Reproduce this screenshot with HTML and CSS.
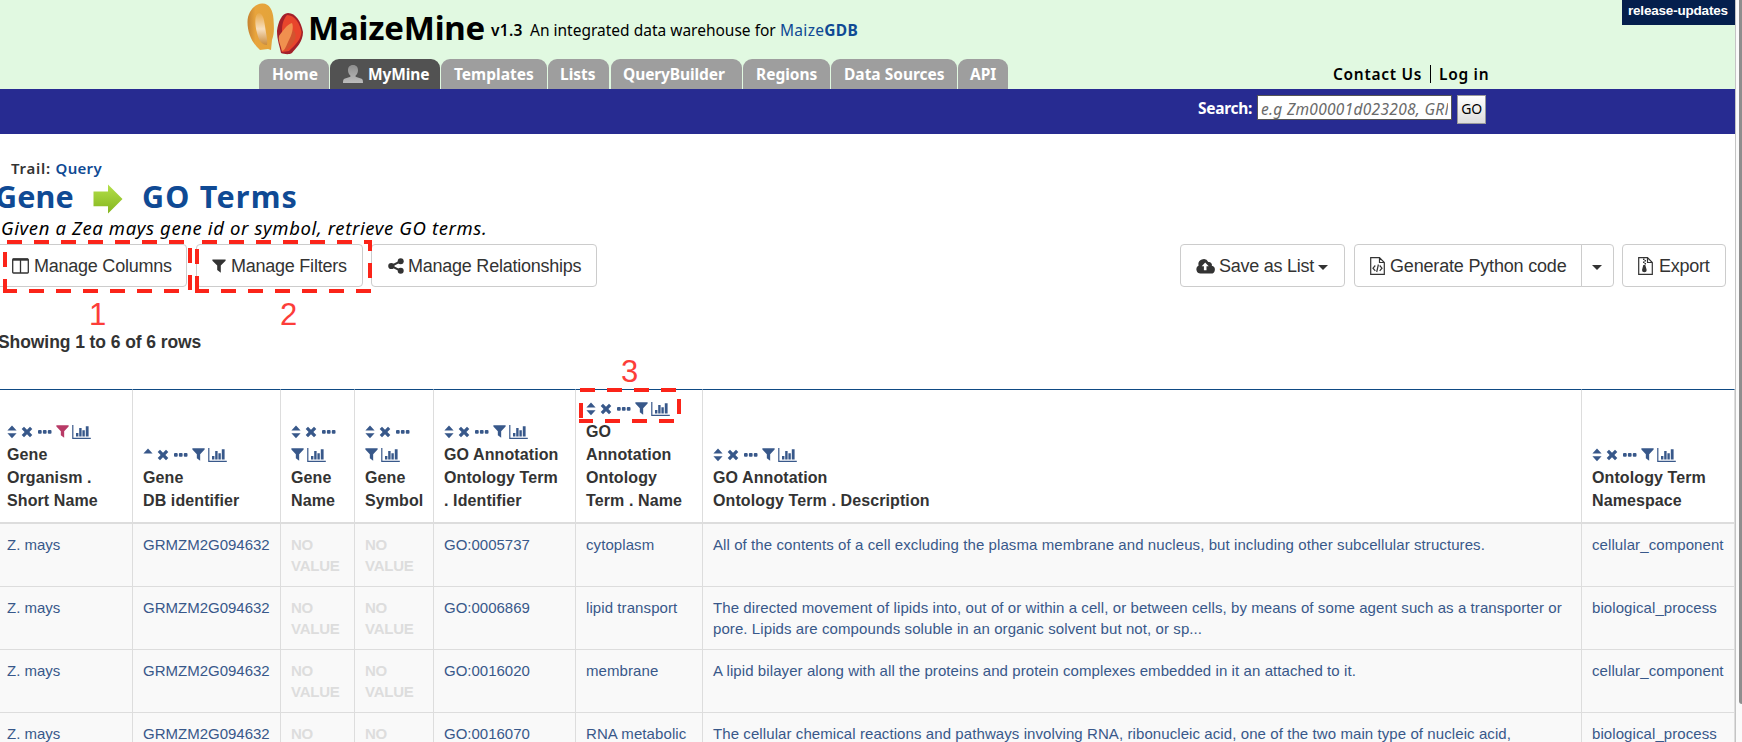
FILE: index.html
```html
<!DOCTYPE html>
<html lang="en">
<head>
<meta charset="utf-8">
<title>MaizeMine</title>
<link rel="stylesheet" href="styles.css">
</head>
<body>
<svg class="defs" width="0" height="0">
  <defs>
    <linearGradient id="gold" x1="0" x2="1"><stop offset="0" stop-color="#c58230"/><stop offset=".3" stop-color="#e8a43c"/><stop offset="1" stop-color="#e3a43a"/></linearGradient>
    <linearGradient id="shine" x1="0" y1="0" x2="0" y2="1"><stop offset="0" stop-color="#e8a848"/><stop offset=".5" stop-color="#f7dfbe"/><stop offset="1" stop-color="#c98a3a"/></linearGradient>
    <linearGradient id="person" x1="0" y1="0" x2="0" y2="1"><stop offset="0" stop-color="#8e8e8e"/><stop offset="1" stop-color="#bdbdbd"/></linearGradient>
    <linearGradient id="lime" x1="0" y1="0" x2="0" y2="1"><stop offset="0" stop-color="#b4e04a"/><stop offset="1" stop-color="#84b51e"/></linearGradient>
    <symbol id="filter" viewBox="0 0 14 14"><path d="M.4.4h13.2v1.3L8.8 6.6V13.8L5.2 11V6.6L.4 1.7z"/></symbol>
    <symbol id="sort" viewBox="0 0 10 14"><path d="M5 .6 9.6 5.6H.4zM.4 8.2h9.2L5 13.2z"/></symbol>
    <symbol id="sort-asc" viewBox="0 0 10 14"><path d="M5 .6 9.6 5.4H.4z"/></symbol>
    <symbol id="times" viewBox="0 0 12 12"><path d="M3 .8 6 3.7 9 .8l2.3 2.3L8.4 6l2.9 2.9L9 11.2 6 8.3l-3 2.9L.7 8.9 3.6 6 .7 3.1z"/></symbol>
    <symbol id="dots" viewBox="0 0 14 4"><rect x="0" y="0" width="3.7" height="3.7" rx="1"/><rect x="4.9" y="0" width="3.7" height="3.7" rx="1"/><rect x="9.8" y="0" width="3.7" height="3.7" rx="1"/></symbol>
    <symbol id="chart" viewBox="0 0 19 14"><path d="M.2 0h1.2v12.8H18.800V14H.2z"/><path d="M4 8h2.400v3.600H4zM7.200 3h2.400v8.600H7.200zM10.400 5.200h2.400v6.400h-2.400zM13.800 1.200H16.600v10.400H13.800z"/></symbol>
  </defs>
</svg>
<div class="page">
  <header class="banner">
    <div class="brand">
      <svg class="logo" viewBox="0 0 58 54" width="58" height="54">
        <path d="M15 1.500C22 1 26 8 26.500 17c.5 9 1 14-1.500 21l-1 10-3-1-8 1C5 41 .5 31 .5 20 .5 10 7 2 15 1.500z" fill="url(#gold)"/>
        <path d="M12 11c4 1 5 6 6 13 1 8 3 15 2 19-5 0-8-4-10-12C8 23 7 12 12 11z" fill="url(#shine)"/>
        <path d="M41 11C49 11 54 20 56 30c0 10-7 16-11 21-3 2-8 1-11 0-1-6-4-13-4-22 1-9 5-18 11-18z" fill="#a3202a"/>
        <path d="M40 13c8 0 13 9 14.500 17C54 38 48 43 42 49l-7 1c-1-6-2-13 0-20 0-8 1-12 5-17z" fill="#e8452c"/>
        <path d="M46 28c6 5 1 15-8 21l1-14z" fill="#d2542f"/>
        <path d="M45 21c2 4 0 12-4 19-2 5-4 9-6 9-1-5-4-10-3-15 3-4 8-12 13-13z" fill="#f0904f"/>
      </svg>
      <h1 class="name">MaizeMine</h1>
      <div class="strap"><b class="version">v1.3</b><span class="tagline">An integrated data warehouse for</span><a class="gdb">Maize<b>GDB</b></a></div>
      <a class="release">release-updates</a>
    </div>
    <div class="navrow">
      <nav class="tabs">
        <a class="tab t-home">Home</a>
        <a class="tab t-mymine"><svg viewBox="0 0 20 18" width="20" height="18"><path d="M10 0c3.500 0 5 2.300 5 5.200 0 2.800-1.200 4.300-2.400 5.300v1.300l6 1.900c1 .5 1.400 1.700 1.400 4.300H0c0-2.600.4-3.800 1.400-4.300l6-1.900v-1.300C6.200 9.500 5 8 5 5.200 5 2.300 6.500 0 10 0z" fill="url(#person)"/></svg>MyMine</a>
        <a class="tab t-templates">Templates</a>
        <a class="tab t-lists">Lists</a>
        <a class="tab t-query">QueryBuilder</a>
        <a class="tab t-regions">Regions</a>
        <a class="tab t-data">Data Sources</a>
        <a class="tab t-api">API</a>
      </nav>
      <div class="account"><a class="contact">Contact Us</a><a class="login">Log in</a></div>
    </div>
  </header>
  <div class="searchbar"><span class="search-label">Search:</span><span class="search-input">e.g Zm00001d023208, GRM</span><span class="go">GO</span></div>
  <main>
    <div class="trail"><span>Trail: </span><a>Query</a></div>
    <h2 class="title"><span class="t-gene">Gene</span><svg class="arrow" viewBox="0 0 30 30" width="30" height="30"><path d="M.5 7.500h14.500V.500L29.500 15 15 29.500v-7.200H.5z" fill="url(#lime)"/></svg><span class="t-go">GO Terms</span></h2>
    <p class="desc">Given a Zea mays gene id or symbol, retrieve GO terms.</p>
    <div class="toolbar">
      <a class="btn b-cols"><svg viewBox="0 0 17 16" width="17" height="16"><path d="M1.500 1h14a.8.8 0 0 1 .8.8v12.400a.8.8 0 0 1-.8.8h-14a.8.8 0 0 1-.8-.8V1.800a.8.8 0 0 1 .8-.8zM8.500 2v13" fill="none" stroke="#333" stroke-width="1.300"/><path d="M1 .5h15v2.200H1z"/></svg><span>Manage Columns</span></a>
      <a class="btn b-filters"><svg width="14" height="14"><use href="#filter"/></svg><span>Manage Filters</span></a>
      <a class="btn b-rel"><svg viewBox="0 0 16 16" width="16" height="16"><path d="M12.800 3.200 3.200 8l9.600 4.800" fill="none" stroke="#333" stroke-width="2"/><circle cx="3.300" cy="8" r="3.100"/><circle cx="12.700" cy="3.300" r="3"/><circle cx="12.700" cy="12.700" r="3"/></svg><span>Manage Relationships</span></a>
      <a class="btn b-save"><svg viewBox="0 0 19 16" width="19" height="16"><path fill-rule="evenodd" d="M4.500 15.500A4.200 4.200 0 0 1 2.600 7.600 5.200 5.200 0 0 1 12.300 4a3 3 0 0 1 3.500 3.800 3.900 3.900 0 0 1-1.100 7.700zM9.200 4.500 5.700 8.300h2.200v4h2.600v-4h2.200z"/></svg><span>Save as List</span><i class="caret"></i></a>
      <a class="btn b-gen"><svg viewBox="0 0 15 18" width="15" height="18"><path d="M.7.700h8.800l4.800 4.800v11.800H.7zM9.500.700v4.800h4.800M5.300 8.500 3 11.200l2.300 2.700M9.700 8.500l2.300 2.700-2.300 2.700M8.400 7.500 6.700 15" fill="none" stroke="#333" stroke-width="1.200"/></svg><span>Generate Python code</span></a>
      <a class="btn b-more"><i class="caret"></i></a>
      <a class="btn b-export"><svg viewBox="0 0 15 18" width="15" height="18"><path d="M.7.700h8.800l4.800 4.800v11.800H.7zM9.500.700v4.800h4.800" fill="none" stroke="#333" stroke-width="1.200"/><path d="M5 1.500h1.500V3H5zM6.500 3H8v1.500H6.500zM5 4.500h1.500V6H5zM6.500 6H8v1.500H6.500zM5.300 8h2l1.400 5a2.300 2.300 0 1 1-4.700 0z"/></svg><span>Export</span></a>
    </div>
    <p class="showing">Showing 1 to 6 of 6 rows</p>
    <table class="results">
      <colgroup><col class="c1"><col class="c2"><col class="c3"><col class="c4"><col class="c5"><col class="c6"><col class="c7"><col class="c8"></colgroup>
      <thead><tr>
        <th><div class="tools"><svg class="i-sort"><use href="#sort"/></svg><svg class="i-times"><use href="#times"/></svg><svg class="i-dots"><use href="#dots"/></svg><svg class="i-filter on"><use href="#filter"/></svg><svg class="i-chart"><use href="#chart"/></svg></div>Gene<br>Organism .<br>Short Name</th>
        <th><div class="tools"><svg class="i-sort"><use href="#sort-asc"/></svg><svg class="i-times"><use href="#times"/></svg><svg class="i-dots"><use href="#dots"/></svg><svg class="i-filter"><use href="#filter"/></svg><svg class="i-chart"><use href="#chart"/></svg></div>Gene<br>DB identifier</th>
        <th><div class="tools"><svg class="i-sort"><use href="#sort"/></svg><svg class="i-times"><use href="#times"/></svg><svg class="i-dots"><use href="#dots"/></svg></div><div class="tools"><svg class="i-filter first"><use href="#filter"/></svg><svg class="i-chart"><use href="#chart"/></svg></div>Gene<br>Name</th>
        <th><div class="tools"><svg class="i-sort"><use href="#sort"/></svg><svg class="i-times"><use href="#times"/></svg><svg class="i-dots"><use href="#dots"/></svg></div><div class="tools"><svg class="i-filter first"><use href="#filter"/></svg><svg class="i-chart"><use href="#chart"/></svg></div>Gene<br>Symbol</th>
        <th><div class="tools"><svg class="i-sort"><use href="#sort"/></svg><svg class="i-times"><use href="#times"/></svg><svg class="i-dots"><use href="#dots"/></svg><svg class="i-filter"><use href="#filter"/></svg><svg class="i-chart"><use href="#chart"/></svg></div>GO Annotation<br>Ontology Term<br>. Identifier</th>
        <th><div class="tools"><svg class="i-sort"><use href="#sort"/></svg><svg class="i-times"><use href="#times"/></svg><svg class="i-dots"><use href="#dots"/></svg><svg class="i-filter"><use href="#filter"/></svg><svg class="i-chart"><use href="#chart"/></svg></div>GO<br>Annotation<br>Ontology<br>Term . Name</th>
        <th><div class="tools"><svg class="i-sort"><use href="#sort"/></svg><svg class="i-times"><use href="#times"/></svg><svg class="i-dots"><use href="#dots"/></svg><svg class="i-filter"><use href="#filter"/></svg><svg class="i-chart"><use href="#chart"/></svg></div>GO Annotation<br>Ontology Term . Description</th>
        <th><div class="tools"><svg class="i-sort"><use href="#sort"/></svg><svg class="i-times"><use href="#times"/></svg><svg class="i-dots"><use href="#dots"/></svg><svg class="i-filter"><use href="#filter"/></svg><svg class="i-chart"><use href="#chart"/></svg></div>Ontology Term<br>Namespace</th>
      </tr></thead>
      <tbody>
        <tr><td>Z. mays</td><td>GRMZM2G094632</td><td class="none">NO<br>VALUE</td><td class="none">NO<br>VALUE</td><td>GO:0005737</td><td>cytoplasm</td><td>All of the contents of a cell excluding the plasma membrane and nucleus, but including other subcellular structures.</td><td>cellular_component</td></tr>
        <tr><td>Z. mays</td><td>GRMZM2G094632</td><td class="none">NO<br>VALUE</td><td class="none">NO<br>VALUE</td><td>GO:0006869</td><td>lipid transport</td><td>The directed movement of lipids into, out of or within a cell, or between cells, by means of some agent such as a transporter or<br>pore. Lipids are compounds soluble in an organic solvent but not, or sp...</td><td>biological_process</td></tr>
        <tr><td>Z. mays</td><td>GRMZM2G094632</td><td class="none">NO<br>VALUE</td><td class="none">NO<br>VALUE</td><td>GO:0016020</td><td>membrane</td><td>A lipid bilayer along with all the proteins and protein complexes embedded in it an attached to it.</td><td>cellular_component</td></tr>
        <tr><td>Z. mays</td><td>GRMZM2G094632</td><td class="none">NO</td><td class="none">NO</td><td>GO:0016070</td><td>RNA metabolic</td><td>The cellular chemical reactions and pathways involving RNA, ribonucleic acid, one of the two main type of nucleic acid,</td><td>biological_process</td></tr>
      </tbody>
    </table>
  </main>
</div>
<div class="scroll"><div class="thumb"></div></div>
<svg class="marks" width="1742" height="742" viewBox="0 0 1742 742">
  <g fill="none" stroke="#fb2419" stroke-width="4">
    <g stroke-dasharray="15 12">
      <path d="M7 242H190M29 291H180"/>
      <path d="M202 242H353M221 291H372"/>
      <path d="M580 390H677M605 421H675"/>
    </g>
    <path d="M190 248V263M190 275V290M5 252V267M5 279V291H17"/>
    <path d="M364 242H370V251M370 263V278M197 249V264M197 276V291H209"/>
    <path d="M679 399V414M581 403V418M579 421H593"/>
  </g>
</svg>
<span class="num n1">1</span><span class="num n2">2</span><span class="num n3">3</span>
</body>
</html>
```
FILE: styles.css
```css
* { box-sizing: border-box; }
body { margin: 0; width: 1742px; height: 742px; overflow: hidden; display: flex; position: relative; background: #fff; color: #333; font-family: "Liberation Sans", Arial, sans-serif; }
.defs { position: absolute; }
.page { width: 1735px; height: 742px; overflow: hidden; flex: none; }
h1, h2, p { margin: 0; }
.banner, .searchbar, .trail, .title, .desc { font-family: "Noto Sans", "Open Sans", sans-serif; }
.banner { height: 89px; background: #e1f9e1; color: #000; }
.brand { height: 59px; display: flex; align-items: flex-start; padding-left: 247px; white-space: nowrap; }
.logo { margin-top: 2px; flex: none; }
.name { font-size: 33px; line-height: 55px; letter-spacing: -0.2px; width: 183px; margin-left: 3px; }
.strap { display: flex; font-size: 15.5px; line-height: 61px; }
.version { font-weight: 600; width: 39px; letter-spacing: 0.3px; }
.tagline { width: 250px; }
.gdb { color: #0f4a94; letter-spacing: 0.3px; }
.release { margin-left: auto; width: 113px; height: 25px; padding-left: 6px; background: #041f4d; color: #fff; font: bold 13.5px/21px "Liberation Sans", Arial, sans-serif; letter-spacing: -0.2px; }
.navrow { display: flex; height: 30px; padding-left: 259px; }
.tabs { display: flex; }
.tab { height: 30px; margin-right: 1px; padding-left: 13px; border-radius: 9px 9px 0 0; background: #9e9e9e; color: #fff; font-size: 15.5px; font-weight: 700; line-height: 30px; white-space: nowrap; }
.t-home { width: 70px; }
.t-mymine { width: 110px; background: #525252; display: flex; align-items: center; gap: 5px; letter-spacing: -0.1px; }
.t-templates { width: 106px; }
.t-lists { width: 61px; padding-left: 12px; }
.t-query { width: 131px; margin-left: 1px; padding-left: 12px; letter-spacing: -0.1px; }
.t-regions { width: 87px; padding-left: 13px; }
.t-data { width: 126px; }
.t-api { width: 50px; padding-left: 12px; }
.account { margin-left: auto; margin-right: 240px; display: flex; align-items: center; font-size: 15.5px; font-weight: 600; line-height: 18px; letter-spacing: 0.7px; white-space: nowrap; }
.contact { width: 97px; }
.login { width: 65px; padding-left: 8px; border-left: 1px solid #000; }
.searchbar { height: 45px; background: #272b91; display: flex; align-items: flex-start; padding: 6px 0 0 1198px; color: #fff; }
.search-label { font-size: 15.5px; font-weight: 700; width: 59px; line-height: 27px; letter-spacing: -0.3px; }
.search-input { width: 195px; height: 25px; border: 1px solid #555; background: #fff; color: #6a6a6a; font-size: 15.5px; font-style: italic; line-height: 26px; padding-left: 3px; overflow: hidden; white-space: nowrap; border-right: 4px solid #fff; outline: 1px solid #555; outline-offset: -1px; letter-spacing: 0.3px; }
.go { width: 29px; height: 29px; margin-left: 5px; border: 1px solid #9a9a9a; background: linear-gradient(#fff, #ddd); color: #000; font: 14px/26px "Noto Sans", sans-serif; letter-spacing: -0.3px; text-align: center; }
.trail { padding: 24px 0 0 11px; font-size: 15px; font-weight: 600; line-height: 20px; }
.trail span { letter-spacing: 0.75px; }
.trail a { letter-spacing: 0.3px; }
.trail a, .title { color: #0f4a94; }
.title { display: flex; align-items: center; height: 38px; font-size: 30.5px; line-height: 38px; letter-spacing: 1.2px; white-space: nowrap; }
.title span { height: 40px; }
.arrow { margin-top: 3px; }
.t-gene { width: 98px; margin-left: -5px; letter-spacing: 0.1px; }
.t-go { margin-left: 19px; }
.desc { color: #000; height: 28px; font-size: 18.5px; font-style: italic; line-height: 24px; letter-spacing: 0.62px; padding-left: 1px; white-space: nowrap; }
.toolbar { display: flex; height: 43px; }
.btn { height: 43px; border: 1px solid #ccc; border-radius: 4px; display: flex; align-items: center; font-size: 18px; line-height: 41px; letter-spacing: -0.24px; white-space: nowrap; fill: #333; flex: none; }
.btn span { padding-top: 2px; }
.b-cols { width: 191px; margin-left: -4px; padding-left: 15px; gap: 5px; }
.b-filters { width: 167px; margin-left: 9px; padding-left: 15px; gap: 5px; }
.b-rel { width: 226px; margin-left: 8px; padding-left: 16px; gap: 4px; }
.b-save { width: 165px; margin-left: auto; padding-left: 15px; gap: 4px; letter-spacing: -0.25px; }
.b-gen { width: 228px; margin-left: 9px; padding-left: 15px; gap: 5px; border-radius: 4px 0 0 4px; letter-spacing: -0.18px; }
.b-more { width: 33px; margin-left: -1px; padding-left: 10px; border-radius: 0 4px 4px 0; }
.b-export { width: 104px; margin: 0 9px 0 8px; padding-left: 15px; gap: 6px; }
.caret { border: 5px solid transparent; border-top-color: #333; border-bottom: 0; margin-top: 3px; }
.showing { font-size: 17.5px; font-weight: 700; line-height: 24px; letter-spacing: -0.08px; margin: 43px 0 35px -2px; }
.results { table-layout: fixed; width: 1738px; margin-left: -3px; border-spacing: 0; border-collapse: separate; }
.c1 { width: 136px; } .c2 { width: 148px; } .c3 { width: 74px; } .c4 { width: 79px; }
.c5 { width: 142px; } .c6 { width: 127px; } .c7 { width: 879px; } .c8 { width: 153px; }
th { height: 135px; border-top: 1px solid #0f4a84; border-right: 1px solid #ddd; border-bottom: 2px solid #ddd; padding: 0 0 10px 10px; vertical-align: bottom; text-align: left; font-size: 16px; line-height: 23px; letter-spacing: 0.1px; white-space: nowrap; }
td { height: 63px; border-right: 1px solid #ddd; border-bottom: 1px solid #ddd; padding: 10px 0 0 10px; vertical-align: top; background: #f9f9f9; color: #38588a; font-size: 15px; line-height: 21px; white-space: nowrap; }
td:nth-child(n+6) { letter-spacing: 0.085px; }
td.none { color: #ddd; font-weight: 700; letter-spacing: -0.25px; }
.tools { height: 23px; display: flex; align-items: center; fill: #38588a; }
.i-sort { width: 10px; height: 14px; }
.i-times { width: 12px; height: 12px; margin-left: 4px; }
.i-dots { width: 14px; height: 4px; margin-left: 5px; }
.i-filter { width: 13px; height: 13px; margin-left: 4px; }
.i-filter.first { margin-left: 0; }
.i-filter.on { fill: #b83a66; }
.i-chart { width: 19px; height: 14px; margin-left: 3px; }
.scroll { width: 7px; height: 742px; border-left: 1px solid #c4c4c4; background: #fafafa; display: flex; justify-content: flex-end; }
.thumb { width: 3px; height: 704px; background: #8e8e8e; border-radius: 0 0 0 3px; }
.marks { position: absolute; left: 0; top: 0; }
.num { position: absolute; color: #fc3d39; font-size: 31px; line-height: 36px; }
.n1 { left: 89px; top: 297px; } .n2 { left: 280px; top: 297px; } .n3 { left: 621px; top: 354px; }
```
